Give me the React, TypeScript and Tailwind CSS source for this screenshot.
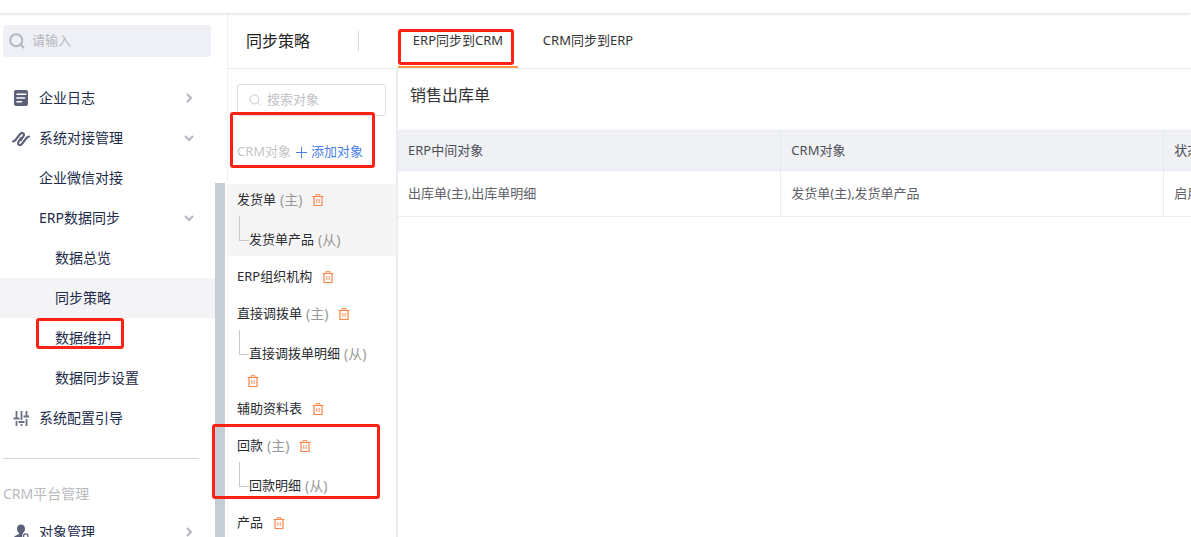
import type { ReactNode } from "react";
import clsx from "clsx";

type IconProps = { className?: string };

function SearchIcon({ className }: IconProps) {
  return (
    <svg viewBox="0 0 16 16" fill="none" stroke="currentColor" className={className} aria-hidden="true">
      <circle cx="7.2" cy="7.2" r="6" />
      <path d="M11.4 11.4 L15 15" />
    </svg>
  );
}

function ChevronRight() {
  return (
    <svg viewBox="0 0 10 10" className="size-[10px]" fill="none" stroke="#b4b6c0" strokeWidth="2" aria-hidden="true">
      <path d="M3 1 L7 5 L3 9" />
    </svg>
  );
}

function ChevronDown() {
  return (
    <svg viewBox="0 0 10 10" className="size-[10px]" fill="none" stroke="#b4b6c0" strokeWidth="2" aria-hidden="true">
      <path d="M1 3 L5 7 L9 3" />
    </svg>
  );
}

function LogIcon() {
  return (
    <svg viewBox="0 0 18 18" className="size-[18px]" aria-hidden="true">
      <rect x="2" y="1" width="14" height="16" rx="2" fill="#5c6078" />
      <path d="M5 5.2h8.600M5 9h7.500M5 12.8h4.500" stroke="#fff" strokeWidth="1.600" strokeLinecap="round" />
    </svg>
  );
}

function LinkIcon() {
  return (
    <svg viewBox="0 0 18 18" className="size-[18px]" fill="none" stroke="#5c6078" strokeWidth="2.2" strokeLinecap="round" strokeLinejoin="round" aria-hidden="true">
      <path d="M1.200 12.400 L3.400 11.200 L8 5.200 Q9.600 3.200 11.200 4.400 Q12.600 5.600 11.300 7.500 L8.800 11" />
      <path d="M16.800 7.600 L14.600 8.800 L10 14.800 Q8.400 16.800 6.800 15.600 Q5.400 14.400 6.700 12.500 L9.200 9" />
    </svg>
  );
}

function SlidersIcon() {
  return (
    <svg viewBox="0 0 18 18" className="size-[18px]" fill="none" stroke="#6c7084" strokeWidth="1.8" aria-hidden="true">
      <path d="M4.500 2v5M4.500 12v5M9.500 2v9M9.500 15v2M14.500 2v3M14.500 10v7" />
      <path d="M1.500 9.500h6M6.500 13h6M11.500 7.500h5.500" />
      <path d="M4.500 7v3M14.500 5v3" />
    </svg>
  );
}

function UserIcon() {
  return (
    <svg viewBox="0 0 18 18" className="size-[18px]" aria-hidden="true">
      <path d="M9 1.500c2.600 0 4 1.800 4 4.200 0 2-.8 3.300-2 4.200v1.200L15.500 13c1 .6 1.500 1.500 1.500 4H1.500c0-2.500.5-3.400 1.500-4l4-1.900V9.900C5.800 9 5 7.700 5 5.700 5 3.300 6.400 1.500 9 1.500z" fill="#5c6078" />
      <circle cx="13.800" cy="13" r="3.600" fill="#fff" />
      <circle cx="13.800" cy="13" r="2.200" fill="none" stroke="#5c6078" strokeWidth="1.200" />
    </svg>
  );
}

function TrashIcon() {
  return (
    <svg viewBox="0 0 12 12" className="size-3" fill="none" stroke="#ff8547" aria-hidden="true">
      <path d="M0.500 2.500h11M2 2.500v9h8v-9" strokeWidth="1.200" />
      <path d="M4 2.500V0.700h4v1.800" />
      <path d="M4.800 5v4M7.200 5v4" strokeWidth="0.900" />
    </svg>
  );
}

function Highlight({ className }: IconProps) {
  return <span aria-hidden="true" className={clsx("pointer-events-none absolute z-20 rounded-[3px] border-3 border-[#ff2114]", className)} />;
}

type NavItemProps = {
  label: string;
  icon?: ReactNode;
  chevron?: "right" | "down";
  nested?: boolean;
  active?: boolean;
  marked?: boolean;
};

function NavItem({ label, icon, chevron, nested, active, marked }: NavItemProps) {
  return (
    <li>
      <a
        href="#"
        className={clsx("relative flex h-10 items-center pr-[21px] text-sm text-[#212b4c]", nested ? "pl-[55px]" : "pl-3", active && "bg-[#f4f4f6]")}
      >
        {!nested && <span className="mr-[9px] flex w-[18px] shrink-0">{icon}</span>}
        <span className="flex-1">{label}</span>
        {chevron === "right" && <ChevronRight />}
        {chevron === "down" && <ChevronDown />}
        {marked && <Highlight className="top-0 left-9 h-[31px] w-[88px]" />}
      </a>
    </li>
  );
}

function Sidebar() {
  return (
    <aside className="relative w-[227px] shrink-0 overflow-hidden pt-3">
      <label className="ml-[3px] flex h-8 w-[208px] items-center gap-[7px] rounded-[3px] bg-[#eff0f5] pl-[6px]">
        <SearchIcon className="size-4 shrink-0 stroke-2 text-[#b4b6c0]" />
        <input
          aria-label="请输入"
          placeholder="请输入"
          className="w-full min-w-0 bg-transparent text-[13px] outline-none placeholder:text-[#b4b6c0]"
        />
      </label>
      <nav className="mt-[21px] w-[215px]">
        <ul>
          <NavItem label="企业日志" icon={<LogIcon />} chevron="right" />
          <NavItem label="系统对接管理" icon={<LinkIcon />} chevron="down" />
          <NavItem label="企业微信对接" />
          <NavItem label="ERP数据同步" chevron="down" />
          <NavItem label="数据总览" nested />
          <NavItem label="同步策略" nested active />
          <NavItem label="数据维护" nested marked />
          <NavItem label="数据同步设置" nested />
          <NavItem label="系统配置引导" icon={<SlidersIcon />} />
        </ul>
        <hr className="mt-5 mr-4 ml-[3px] border-[#d4d5d8]" />
        <h2 className="mt-[25px] mb-2 ml-[3px] text-sm text-[#b9babf]">CRM平台管理</h2>
        <ul>
          <NavItem label="对象管理" icon={<UserIcon />} chevron="right" />
        </ul>
      </nav>
      <div className="absolute top-[170px] right-[2px] bottom-0 w-[10px] bg-[#c5cdd5]" />
    </aside>
  );
}

function DeleteButton({ name }: { name: string }) {
  return (
    <button type="button" aria-label={"删除" + name} className="flex">
      <TrashIcon />
    </button>
  );
}

function RoleTag({ children }: { children: ReactNode }) {
  return <span className="ml-1 text-sm text-[#999]">{children}</span>;
}

type ObjectGroupProps = {
  name: string;
  child?: string;
  childDelete?: boolean;
  active?: boolean;
  marked?: boolean;
};

function ObjectGroup({ name, child, childDelete, active, marked }: ObjectGroupProps) {
  return (
    <li className={clsx("relative mb-[5px] pl-[9px]", active && "bg-[#f5f5f5]")}>
      <div className="flex h-8 items-center whitespace-nowrap">
        <span>{name}</span>
        {child && <RoleTag>(主)</RoleTag>}
        <span className="ml-[10px] flex">
          <DeleteButton name={name} />
        </span>
      </div>
      {child && (
        <div className="flex h-10 pl-[2px] whitespace-nowrap">
          <span className="h-[25px] w-[10px] shrink-0 border-b border-l border-[#c8c9cc]" />
          <span className="mt-2 flex h-8 items-center">
            {child}
            <RoleTag>(从)</RoleTag>
          </span>
        </div>
      )}
      {child && childDelete && (
        <div className="flex h-[18px] items-center pt-1 pl-[10px]">
          <DeleteButton name={child} />
        </div>
      )}
      {marked && <Highlight className="-top-[6px] bottom-[3px] -left-4 w-[168px]" />}
    </li>
  );
}

function ObjectPanel() {
  return (
    <section className="w-[170px] shrink-0 border-r-2 border-[#ebedf3] pt-[15px] text-[13px] text-[#2a2b30]">
      <label className="mr-[10px] ml-[9px] flex h-8 items-center gap-[6px] rounded-[3px] border border-[#dcdee5] pl-[11px]">
        <SearchIcon className="size-3 shrink-0 text-[#b4b6c0]" />
        <input
          aria-label="搜索对象"
          placeholder="搜索对象"
          className="w-full min-w-0 bg-transparent outline-none placeholder:text-[#bfc1c8]"
        />
      </label>
      <div className="relative mt-5 mb-4 flex h-8 items-center pl-[9px] whitespace-nowrap">
        <span className="text-[#c4c5c8]">CRM对象</span>
        <button type="button" className="ml-1 flex items-center gap-1 text-[#4a80e4]">
          <svg viewBox="0 0 12 12" className="size-3" fill="none" stroke="currentColor" aria-hidden="true">
            <path d="M6.500 1v11M1 6.500h11" />
          </svg>
          添加对象
        </button>
        <Highlight className="-top-6 bottom-0 left-[2px] w-[145px]" />
      </div>
      <ul>
        <ObjectGroup name="发货单" child="发货单产品" active />
        <ObjectGroup name="ERP组织机构" />
        <ObjectGroup name="直接调拨单" child="直接调拨单明细" childDelete />
        <ObjectGroup name="辅助资料表" />
        <ObjectGroup name="回款" child="回款明细" marked />
        <ObjectGroup name="产品" />
      </ul>
    </section>
  );
}

const columns = ["ERP中间对象", "CRM对象", "状态"];
const rows = [["出库单(主),出库单明细", "发货单(主),发货单产品", "启用"]];

function StrategyTable() {
  return (
    <section className="min-w-0 flex-1 overflow-hidden">
      <h2 className="px-3 pt-[14px] pb-[23px] text-base leading-6 text-[#333]">销售出库单</h2>
      <table className="w-[1149px] table-fixed border-collapse text-left text-[13px]">
        <thead>
          <tr className="h-10 border-y border-[#e6e9f2] bg-[#f0f1f5] text-[#4c4e57]">
            {columns.map((column) => (
              <th key={column} className="border-r border-[#e3e7f1] px-[10px] font-normal">
                {column}
              </th>
            ))}
          </tr>
        </thead>
        <tbody>
          {rows.map((row) => (
            <tr key={row[0]} className="h-[46px] border-b border-[#ebedf5] text-[#606167]">
              {row.map((cell) => (
                <td key={cell} className="border-r border-[#ebedf5] px-[10px]">
                  {cell}
                </td>
              ))}
            </tr>
          ))}
        </tbody>
      </table>
    </section>
  );
}

export default function App() {
  return (
    <div className="flex h-screen flex-col overflow-hidden bg-white font-['Noto_Sans','Noto_Sans_CJK_SC',sans-serif]">
      <header className="z-10 h-[13px] shrink-0 bg-white shadow-[0_1px_3px_rgba(0,0,0,0.15)]" />
      <div className="flex min-h-0 flex-1">
        <Sidebar />
        <main className="flex min-w-0 flex-1 flex-col border-l border-[#f3f3f6]">
          <div className="flex h-14 shrink-0 items-stretch border-b border-[#e6eaf4]">
            <div className="flex w-[170px] shrink-0 items-center pl-[18px]">
              <h1 className="w-28 text-base text-[#222]">同步策略</h1>
              <span className="h-5 w-px bg-[#d8dade]" />
            </div>
            <nav className="flex text-[13px] text-[#333]">
              <a href="#" className="relative flex w-[120px] items-center justify-center border-b-2 border-[#ff9340] pt-[3px]">
                ERP同步到CRM
                <Highlight className="top-4 left-0 h-9 w-[116px]" />
              </a>
              <a href="#" className="flex w-[140px] items-center justify-center pt-px">
                CRM同步到ERP
              </a>
            </nav>
          </div>
          <div className="flex min-h-0 flex-1">
            <ObjectPanel />
            <StrategyTable />
          </div>
        </main>
      </div>
    </div>
  );
}
